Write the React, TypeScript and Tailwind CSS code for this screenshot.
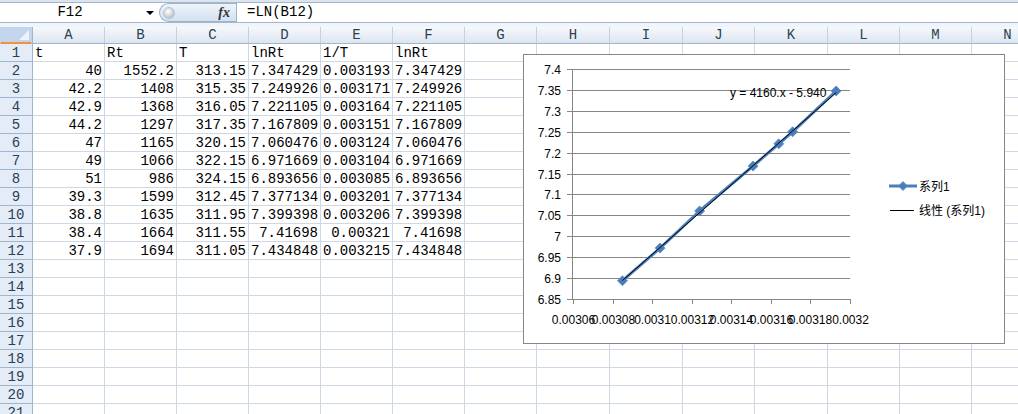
import React from "react";

const mono = "font-['Liberation_Mono',monospace]";

const COLS = [
  { l: "A", w: "w-[72px]" },
  { l: "B", w: "w-[72px]" },
  { l: "C", w: "w-[72px]" },
  { l: "D", w: "w-[72px]" },
  { l: "E", w: "w-[72px]" },
  { l: "F", w: "w-[72px]" },
  { l: "G", w: "w-[72px]" },
  { l: "H", w: "w-[73px]" },
  { l: "I", w: "w-[73px]" },
  { l: "J", w: "w-[72px]" },
  { l: "K", w: "w-[73px]" },
  { l: "L", w: "w-[72px]" },
  { l: "M", w: "w-[72px]" },
  { l: "N", w: "w-[72px]" },
];

const DATA: string[][] = [
  ["t", "Rt", "T", "lnRt", "1/T", "lnRt"],
  ["40", "1552.2", "313.15", "7.347429", "0.003193", "7.347429"],
  ["42.2", "1408", "315.35", "7.249926", "0.003171", "7.249926"],
  ["42.9", "1368", "316.05", "7.221105", "0.003164", "7.221105"],
  ["44.2", "1297", "317.35", "7.167809", "0.003151", "7.167809"],
  ["47", "1165", "320.15", "7.060476", "0.003124", "7.060476"],
  ["49", "1066", "322.15", "6.971669", "0.003104", "6.971669"],
  ["51", "986", "324.15", "6.893656", "0.003085", "6.893656"],
  ["39.3", "1599", "312.45", "7.377134", "0.003201", "7.377134"],
  ["38.8", "1635", "311.95", "7.399398", "0.003206", "7.399398"],
  ["38.4", "1664", "311.55", "7.41698", "0.00321", "7.41698"],
  ["37.9", "1694", "311.05", "7.434848", "0.003215", "7.434848"],
];

// chart scale (page coordinates)
const gy = (v: number) => 69 + (7.4 - v) * 418.18;
const px = (x: number) => 573 + (x - 0.00306) * 1978571;

const POINTS: [number, number][] = DATA.slice(1, 8).map((r) => [
  parseFloat(r[4]),
  parseFloat(r[5]),
]);

const Y_TICKS = [7.4, 7.35, 7.3, 7.25, 7.2, 7.15, 7.1, 7.05, 7, 6.95, 6.9, 6.85];
const X_TICKS = ["0.00306", "0.00308", "0.0031", "0.00312", "0.00314", "0.00316", "0.00318", "0.0032"];
const BLUE = "#4a7ebb";

function Diamond({ cx, cy, r = 5 }: { cx: number; cy: number; r?: number }) {
  return (
    <polygon
      points={`${cx},${cy - r} ${cx + r},${cy} ${cx},${cy + r} ${cx - r},${cy}`}
      fill={BLUE}
      stroke="#5b8ac4"
      strokeWidth="0.8"
    />
  );
}

function Chart() {
  const line = POINTS.map(([x, y]) => `${px(x).toFixed(1)},${gy(y).toFixed(1)}`).join(" ");
  const xMin = 0.003085;
  const xMax = 0.003193;
  const fit = (x: number) => 4160.3 * x - 5.9404;
  return (
    <div className="absolute left-[523px] top-[54px] w-[482px] h-[290px] border border-[#868686] bg-white overflow-hidden">
      <svg width="480" height="288" className="block">
        <g transform="translate(-524,-55)" fontFamily="'Liberation Sans', Arial, sans-serif" fontSize="12">
          {/* gridlines + y ticks */}
          {Y_TICKS.map((v) => {
            const y = Math.round(gy(v)) + 0.5;
            return (
              <g key={v}>
                <line x1={567} x2={850} y1={y} y2={y} stroke="#868686" strokeWidth="1" shapeRendering="crispEdges" />
                <text x={561} y={y + 4} textAnchor="end" fill="#000">
                  {v.toString()}
                </text>
              </g>
            );
          })}
          {/* y axis */}
          <line x1={572.5} x2={572.5} y1={69} y2={Math.round(gy(6.85)) + 1} stroke="#868686" shapeRendering="crispEdges" />
          {/* x ticks + labels */}
          {X_TICKS.map((t, i) => {
            const x = Math.round(573 + i * 39.57) + 0.5;
            return (
              <g key={t}>
                <line x1={x} x2={x} y1={299} y2={304} stroke="#868686" shapeRendering="crispEdges" />
                <text x={x} y={324} textAnchor="middle" fill="#000">
                  {t}
                </text>
              </g>
            );
          })}

          {/* series */}
          <polyline points={line} fill="none" stroke={BLUE} strokeWidth="3" strokeLinejoin="round" strokeLinecap="round" />
          {POINTS.map(([x, y], i) => (
            <Diamond key={i} cx={px(x)} cy={gy(y)} />
          ))}
          {/* trendline */}
          <line x1={px(xMin)} y1={gy(fit(xMin))} x2={px(xMax)} y2={gy(fit(xMax))} stroke="#000" strokeWidth="1" />
          <text x={730} y={97} fill="#000" fontSize="12">
            y = 4160.x - 5.940
          </text>

          {/* legend */}
          <line x1={889} x2={917} y1={186} y2={186} stroke={BLUE} strokeWidth="3" />
          <Diamond cx={903} cy={186} r={4.5} />
          <text x={919} y={190.5} fill="#000" fontFamily="'Liberation Sans', 'Noto Sans CJK SC', sans-serif">
            系列1
          </text>
          <line x1={890} x2={914} y1={210.5} y2={210.5} stroke="#000" strokeWidth="1" />
          <text x={919} y={214.5} fill="#000" fontFamily="'Liberation Sans', 'Noto Sans CJK SC', sans-serif">
            线性 (系列1)
          </text>
        </g>
      </svg>
    </div>
  );
}

function FormulaBar() {
  return (
    <div>
      <div className="h-[2px] bg-[#dde4ee]" />
      <div className={`h-[21px] flex items-center border-y border-[#a3b6cd] bg-white ${mono} text-[14px] text-black`}>
        <div className="w-[140px] text-center leading-[19px]">F12</div>
        <div className="w-[19px] flex justify-center">
          <div className="w-0 h-0 border-x-[4px] border-t-[4px] border-x-transparent border-t-black" />
        </div>
        <div className="w-[77px] h-[19px] flex items-center justify-between rounded-l-full border border-r-0 border-[#9fb3cb] bg-gradient-to-b from-[#eef4fb] to-[#d3e0f1] pl-[3px] pr-[6px]">
          <div className="w-[12px] h-[12px] rounded-full border border-[#b4c3d4] bg-[radial-gradient(circle_at_40%_35%,#ffffff,#c9ced6_60%,#9ea6b2)]" />
          <span className="font-['Liberation_Serif',serif] italic font-bold text-[14px] text-[#333]">fx</span>
        </div>
        <div className="h-[19px] border-l border-[#9fb3cb] pl-[10px] leading-[19px]">=LN(B12)</div>
      </div>
      <div className="h-[4px] bg-[#f1f5fa]" />
    </div>
  );
}

function HeaderRow() {
  return (
    <div className={`flex h-[17px] border-b border-[#9eb6ce] ${mono} text-[14px] text-[#2a3f52]`}>
      <div className="relative w-[33px] shrink-0 border-r border-[#9eb6ce] bg-[#c3d5ec]">
        <div className="absolute right-[3px] bottom-[3px] w-0 h-0 border-l-[10px] border-t-[10px] border-l-transparent border-t-transparent border-r-0 border-b-[10px] border-b-[#eef3fa]" />
        <div className="absolute left-[1px] right-[1px] bottom-[-1px] h-[2px] bg-[#f29436]" />
      </div>
      {COLS.map((c) => (
        <div
          key={c.l}
          className={`${c.w} shrink-0 border-r border-[#c3d1e2] bg-gradient-to-b from-[#f6f9fc] to-[#dde5f0] text-center leading-[16px]`}
        >
          {c.l}
        </div>
      ))}
    </div>
  );
}

function Row({ n }: { n: number }) {
  const vals = DATA[n - 1];
  return (
    <div className={`flex h-[18px] ${mono} text-[14px]`}>
      <div className="w-[33px] shrink-0 border-r border-b border-[#9eb6ce] bg-[#e4ecf7] text-center text-[#2a3f52] leading-[18px]">
        {n}
      </div>
      {COLS.map((c, i) => {
        const v = vals ? vals[i] : undefined;
        return (
          <div
            key={c.l}
            className={`${c.w} shrink-0 border-r border-b border-[#d0d7e5] px-[2px] leading-[18px] whitespace-nowrap overflow-hidden text-black ${
              n === 1 ? "text-left" : "text-right"
            }`}
          >
            {v ?? ""}
          </div>
        );
      })}
    </div>
  );
}

export default function App() {
  const rows = Array.from({ length: 21 }, (_, i) => i + 1);
  return (
    <div className="relative w-[1018px] h-[414px] overflow-hidden bg-white">
      <FormulaBar />
      <HeaderRow />
      {rows.map((n) => (
        <Row key={n} n={n} />
      ))}
      <Chart />
    </div>
  );
}
